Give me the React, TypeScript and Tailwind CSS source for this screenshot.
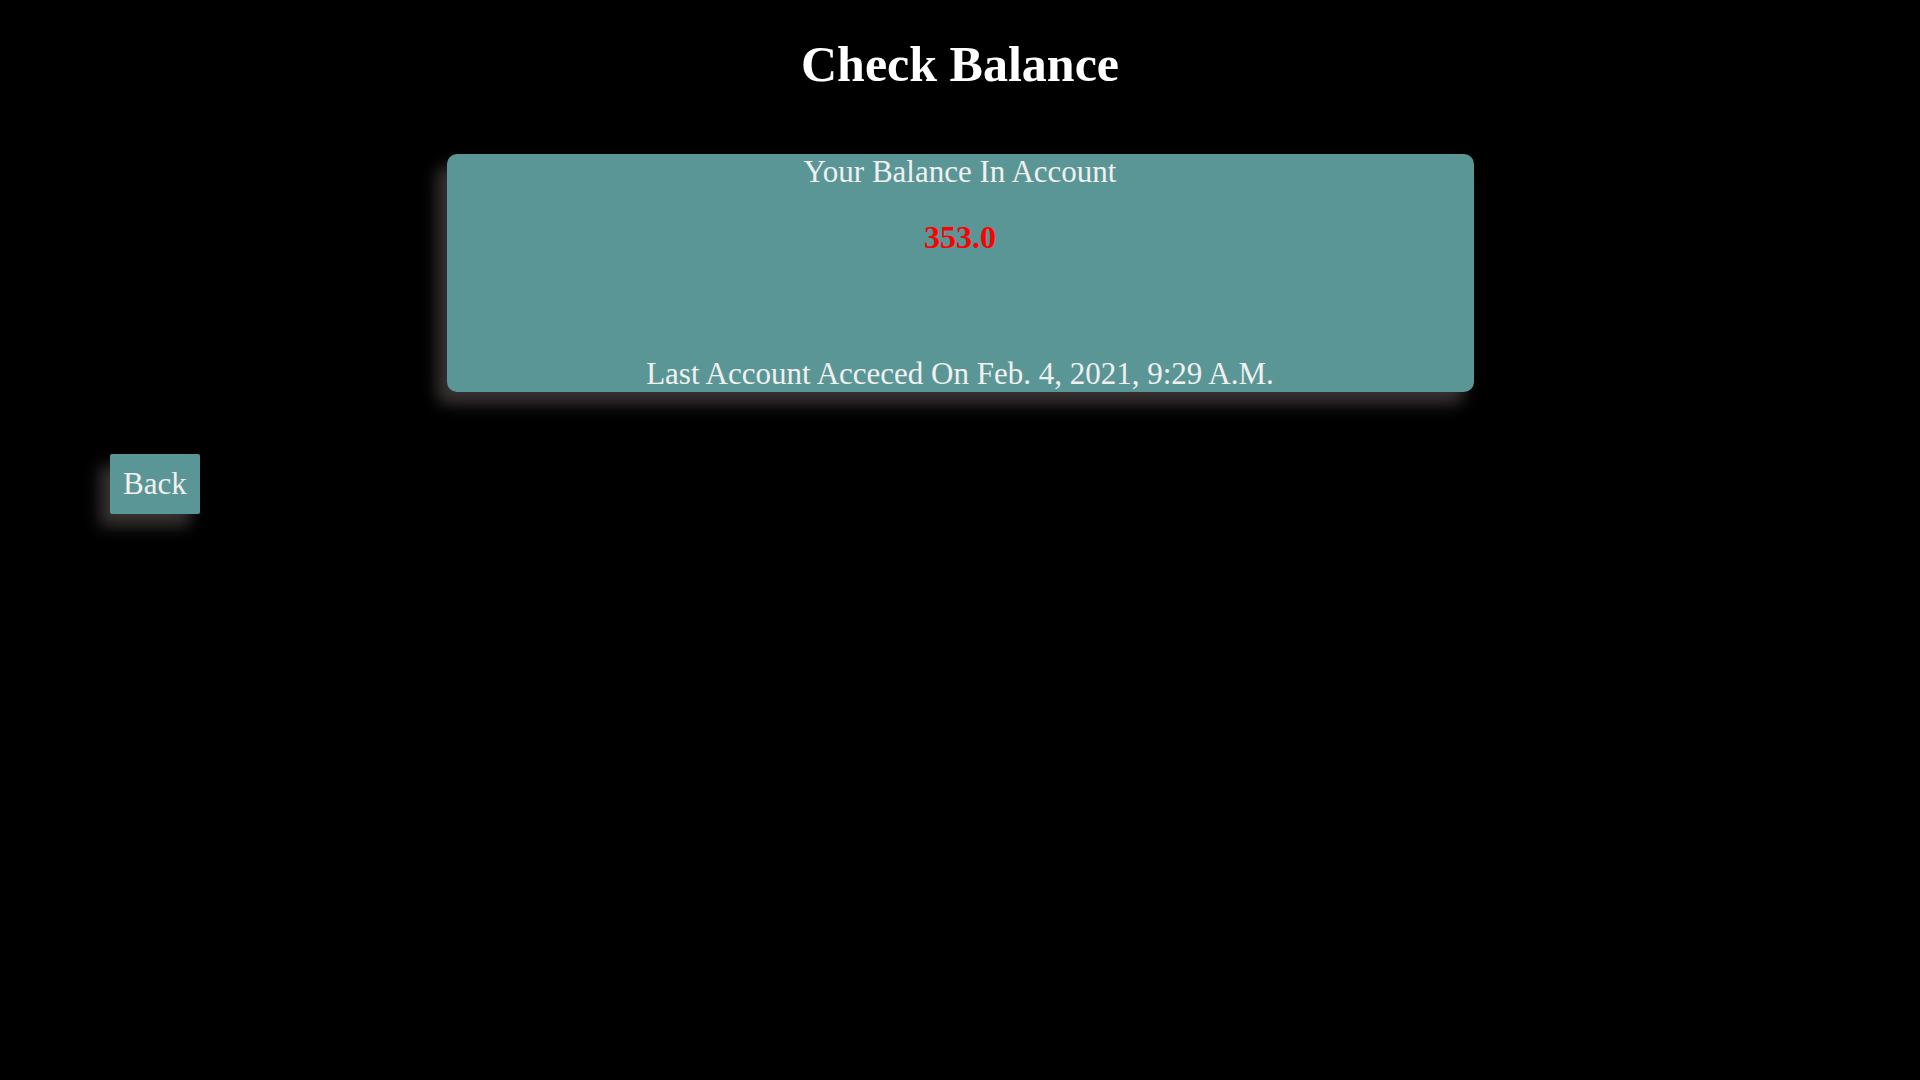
const App = () => {
  return (
    <div className="min-h-screen w-full bg-black font-['Liberation_Serif','Times_New_Roman',serif] text-[#f0f0f0] pt-[36px]">
      <h1 className="text-center text-[50px] leading-[57px] font-bold text-white">
        Check Balance
      </h1>
      <section className="mt-[61px] mx-auto w-[1027px] h-[238px] rounded-[10px] bg-[#5b9697] shadow-[-10px_12px_16px_#3a3434] flex flex-col items-center">
        <h2 className="text-[31px] leading-[39px] mt-[-2px]">Your Balance In Account</h2>
        <p className="mt-[28px] text-[32px] leading-[36px] font-bold text-[#ff0000]">353.0</p>
        <p className="mt-auto text-[31px] leading-[36px]">
          Last Account Acceced On Feb. 4, 2021, 9:29 A.M.
        </p>
      </section>
      <div className="mt-[62px] pl-[110px]">
        <button className="h-[60px] px-[13px] rounded-[2px] bg-[#5b9697] text-[31px] leading-[36px] text-[#f0f0f0] shadow-[-10px_12px_16px_#3a3434]">
          Back
        </button>
      </div>
    </div>
  );
};

export default App;
